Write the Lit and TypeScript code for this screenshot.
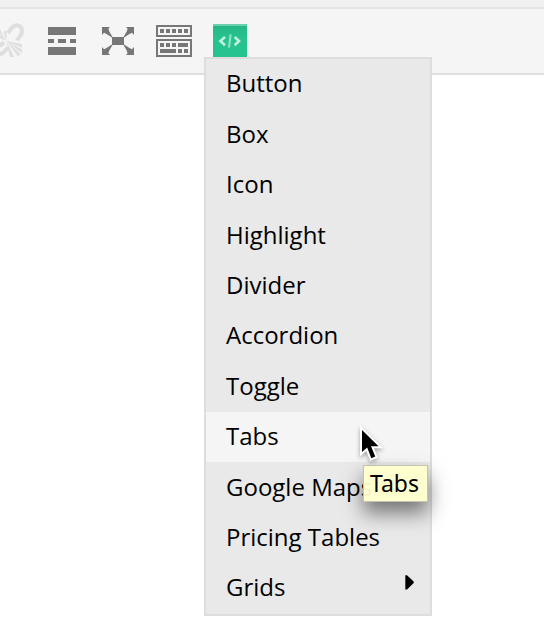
import { LitElement, html, css, svg } from "lit";
import { customElement, property } from "lit/decorators.js";
import { classMap } from "lit/directives/class-map.js";

const rect = (x: number, y: number, w: number, h: number) =>
  svg`<rect x=${x} y=${y} width=${w} height=${h} />`;

@customElement("editor-toolbar")
class EditorToolbar extends LitElement {
  static styles = css`
    :host { display: block; padding-top: 7px; background: #f0f0f0; }
    .bar {
      box-sizing: border-box; height: 68px; display: flex; align-items: flex-start;
      padding-top: 14px; background: #f5f5f5;
      border-top: 2px solid #e5e5e5; border-bottom: 2px solid #dedede;
    }
    svg { display: block; flex: none; fill: #777; }
    .unlink { fill: #dedede; stroke: #dedede; }
    .rule { margin-left: 22px; }
    .expand { margin-left: 26px; }
    .keys { margin-left: 22px; }
    .code { margin-left: 21px; height: 34px; }
  `;
  render() {
    return html`<div class="bar">
      <svg class="unlink" width="26" height="34" viewBox="0 23 26 34">
        <g stroke="none">
          <path d="M6.4 40.8 L0 38 V34.6Z M6.4 40.8 L0 33 V29.4Z M6.4 40.8 L3.6 31.5 L6.6 31Z" />
          <path d="M6.4 40.8 L22 44.3 V47.8Z M6.4 40.8 L22 49.2 V53.6Z M6.4 40.8 L20.5 54 L18 56.6Z M6.4 40.8 L14 57 H9.8Z" />
        </g>
        <path fill="none" stroke-width="4" d="M8 33 L12.2 27.4 Q14.4 25 17 25.2 Q22 26 22 31 Q22 34 20 36.2 L16.8 40.2" />
        <path fill="none" stroke-width="4" d="M-2 47 L4.2 42.3 M-3 54 Q1.5 55 4.5 51.5 L8 47.5" />
      </svg>
      <svg class="rule" width="28" height="34" viewBox="48 23 28 34" shape-rendering="crispEdges">
        ${rect(48, 27, 28, 8)}${rect(48, 39, 6, 4)}${rect(58, 39, 8, 4)}${rect(70, 39, 6, 4)}${rect(48, 47, 28, 8)}
      </svg>
      <svg class="expand" width="32" height="34" viewBox="102 23 32 34">
        ${rect(112, 37, 12, 8)}
        ${["", "translate(236 0) scale(-1 1)", "translate(0 82) scale(1 -1)", "translate(236 82) scale(-1 -1)"].map(
          (t) => svg`<path transform=${t} d="M102 27 H110 L108.4 28.8 L109.3 31.5 L112.8 37.4 L112.3 37.8 L106.5 34 L104 32.8 L102 35Z" />`
        )}
      </svg>
      <svg class="keys" width="36" height="34" viewBox="156 23 36 34" shape-rendering="crispEdges">
        <path fill-rule="evenodd" d="M156 25h36v12h-36z M158 27v8h32v-8z M156 39h36v18h-36z M158 41v14h32v-14z" />
        ${[160, 166, 172, 178, 184].map((x) => rect(x, 29, 4, 4))}
        ${[160, 166, 172].map((x) => rect(x, 43, 4, 4))}${rect(178, 43, 10, 4)}
        ${rect(160, 49, 16, 4)}${rect(178, 49, 4, 4)}${rect(184, 49, 4, 4)}
      </svg>
      <svg class="code" width="34" height="34" viewBox="213 23 34 34">
        <defs><linearGradient id="g" x2="0" y2="1"><stop stop-color="#27b485" /><stop offset=".4" stop-color="#26c28f" /></linearGradient></defs>
        <rect x="213" y="24" width="34" height="33" fill="url(#g)" />
        <rect x="213" y="24" width="34" height="2" fill="#6ad0ad" />
        <path fill="none" stroke="#c0f0de" stroke-width="2.6" d="M225 37 L220.4 41 L225 45.2 M234.6 37 L239 41 L234.6 45.2" />
        <path fill="none" stroke="#8de2c4" stroke-width="2.2" d="M230.6 34.3 L229 47.7" />
      </svg>
    </div>`;
  }
}

@customElement("shortcode-menu")
class ShortcodeMenu extends LitElement {
  @property({ type: Array }) items: string[] = [];
  @property() active = "";
  static styles = css`
    :host {
      display: block; box-sizing: border-box; width: 228px; height: 559px;
      background: #e9e9e9; border: 2px solid #ddd;
    }
    .item {
      box-sizing: border-box; height: 50.4px; padding: 0 16px 0 20px;
      display: flex; align-items: center; justify-content: space-between;
      font: 24px/48px "Open Sans", sans-serif; color: #000; white-space: nowrap;
    }
    .label { position: relative; top: -0.8px; }
    .active { background: #f5f5f5; }
    .arrow { display: block; margin-top: -12px; }
  `;
  render() {
    return this.items.map(
      (item) => html`<div class=${classMap({ item: true, active: item === this.active })}>
        <span class="label">${item}</span>
        ${item === "Grids"
          ? html`<svg class="arrow" width="9" height="15" viewBox="0 0 9 15"><path d="M0.3 0.3H2L8.7 6.6V8L2 14.5H0.3Z" /></svg>`
          : ""}
      </div>`
    );
  }
}

@customElement("app-root")
class AppRoot extends LitElement {
  static styles = css`
    :host { display: block; position: relative; height: 626px; overflow: hidden; background: #fff; }
    .menu { position: absolute; left: 204px; top: 57px; }
    .tip {
      position: absolute; left: 363px; top: 465px; width: 65px; height: 37px;
      box-sizing: border-box; padding-left: 6px; border: 1px solid #c3c3af;
      background: rgba(255, 255, 204, 0.95); box-shadow: 0 11px 20px rgba(0, 0, 0, 0.5);
      font: 23px/35px "Noto Sans", sans-serif; color: #000;
    }
    .cursor { position: absolute; left: 355px; top: 421px; filter: drop-shadow(0 2px 2px rgba(0, 0, 0, 0.35)); }
  `;
  render() {
    return html`
      <editor-toolbar></editor-toolbar>
      <shortcode-menu class="menu" active="Tabs"
        .items=${["Button", "Box", "Icon", "Highlight", "Divider", "Accordion", "Toggle", "Tabs", "Google Maps", "Pricing Tables", "Grids"]}
      ></shortcode-menu>
      <div class="tip">Tabs</div>
      <svg class="cursor" width="30" height="44" viewBox="355 421 30 44">
        <path fill="#000" stroke="#fff" stroke-width="4" paint-order="stroke" d="M362 430 V452 L367.2 447.5 L371.3 458.3 L375.3 456.6 L371 446.2 H378.5Z" />
      </svg>
    `;
  }
}
